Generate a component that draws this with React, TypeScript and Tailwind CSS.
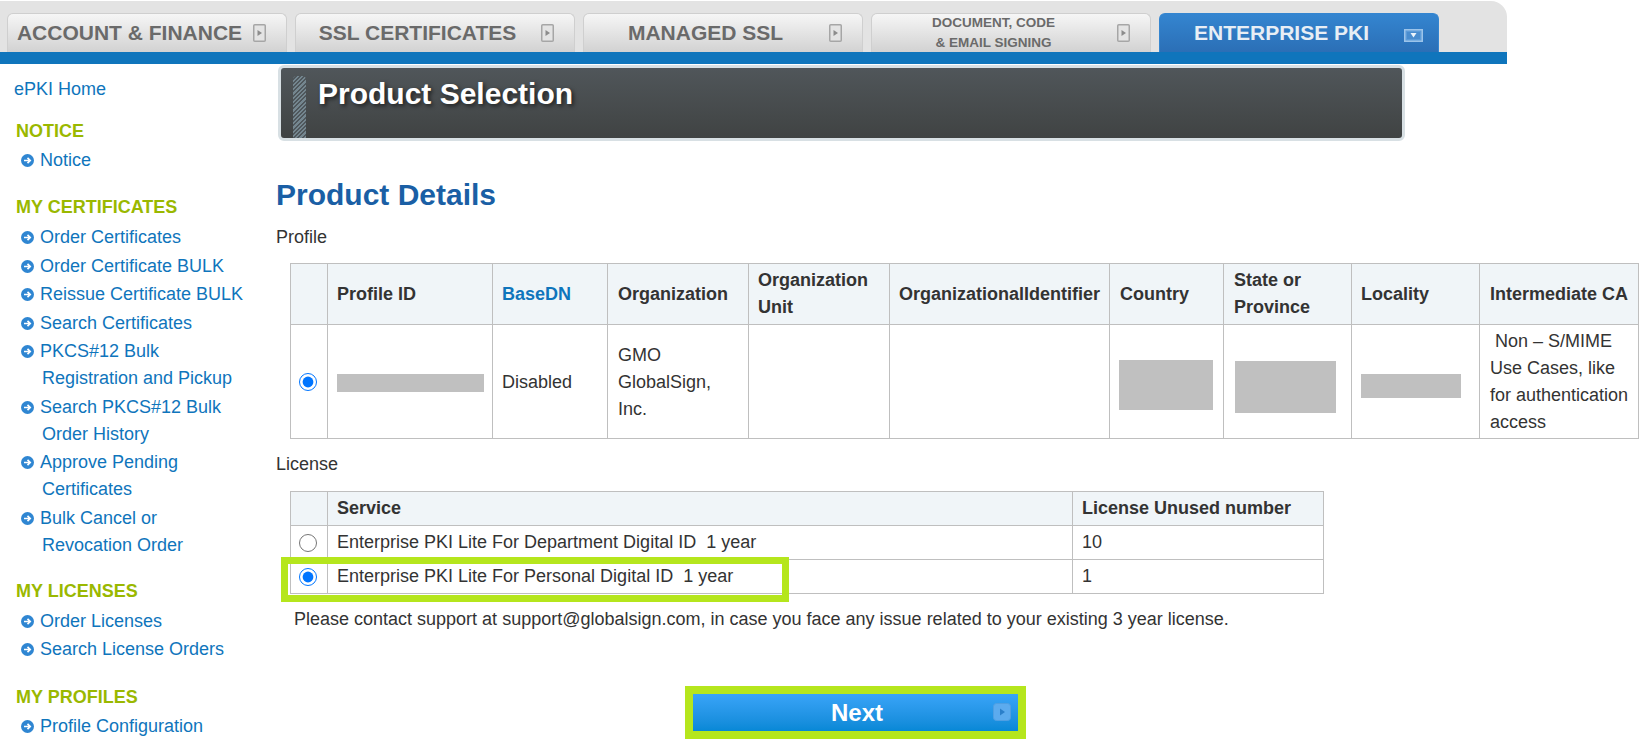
import React from "react";

function TabIcon({ open = false }: { open?: boolean }) {
  if (open) {
    return (
      <svg width="19" height="13" viewBox="0 0 19 13" className="shrink-0 ml-[1px] mt-[5px]">
        <rect x="0.75" y="0.75" width="17.5" height="11.5" fill="#5c9bd8" stroke="#9cc4ea" strokeWidth="1.5" />
        <rect x="3" y="3" width="13" height="7" fill="#4a8dcf" />
        <path d="M6.5 4h6l-3 4.5z" fill="#eef5fb" />
      </svg>
    );
  }
  return (
    <svg width="13" height="18" viewBox="0 0 13 18" className="shrink-0 ml-[2px]">
      <rect x="0.75" y="0.75" width="11.5" height="16.5" rx="1" fill="#e4e4e4" stroke="#a6a6a6" strokeWidth="1.5" />
      <path d="M4.5 6l4.5 3-4.5 3z" fill="#8c8c8c" />
    </svg>
  );
}

function Tab({ label, small, active }: { label: React.ReactNode; small?: boolean; active?: boolean }) {
  return (
    <div
      className={`w-[280px] h-[39px] rounded-t-[6px] border border-b-0 flex items-center ${
        active
          ? "bg-gradient-to-b from-[#3485d0] to-[#2b6fb6] border-[#3485d0] text-[#e8eef5]"
          : "bg-gradient-to-b from-[#f6f6f6] to-[#d2d2d2] border-[#cfcfcf] text-[#6a6a6a]"
      }`}
    >
      <div
        className={`w-[243px] shrink-0 text-center whitespace-nowrap font-bold ${
          small ? "text-[13.5px] leading-[20px]" : "text-[21px] leading-[24px] pb-[1px]"
        }`}
      >
        {label}
      </div>
      <TabIcon open={active} />
    </div>
  );
}

function NavIcon() {
  return (
    <svg width="13" height="13" viewBox="0 0 13 13" className="absolute left-0 top-[7px]">
      <circle cx="6.5" cy="6.5" r="6.5" fill="#2f86d2" />
      <path d="M3 6.5h6M6.5 3.8l2.7 2.7-2.7 2.7" stroke="#ffffff" strokeWidth="1.7" fill="none" />
    </svg>
  );
}

function Item({ children }: { children: React.ReactNode }) {
  return (
    <li className="relative pl-[19px] leading-[27px] text-[18px] text-[#0f75bc] whitespace-nowrap">
      <NavIcon />
      {children}
    </li>
  );
}

function Heading({ children, cls }: { children: React.ReactNode; cls: string }) {
  return <div className={`pl-[16px] text-[18px] leading-[20px] font-bold text-[#9ab800] ${cls}`}>{children}</div>;
}

function Sidebar() {
  const list = "pl-[21px] flex flex-col gap-[1.5px]";
  return (
    <aside className="w-[276px] shrink-0">
      <div className="pl-[14px] pt-[12px] text-[18px] leading-[27px] text-[#0f75bc]">ePKI Home</div>
      <Heading cls="mt-[18px]">NOTICE</Heading>
      <ul className={`${list} mt-[6px]`}>
        <Item>Notice</Item>
      </ul>
      <Heading cls="mt-[23px]">MY CERTIFICATES</Heading>
      <ul className={`${list} mt-[7px]`}>
        <Item>Order Certificates</Item>
        <Item>Order Certificate BULK</Item>
        <Item>Reissue Certificate BULK</Item>
        <Item>Search Certificates</Item>
        <Item>
          PKCS#12 Bulk
          <br />
          <span className="pl-[2px]">Registration and Pickup</span>
        </Item>
        <Item>
          Search PKCS#12 Bulk
          <br />
          <span className="pl-[2px]">Order History</span>
        </Item>
        <Item>
          Approve Pending
          <br />
          <span className="pl-[2px]">Certificates</span>
        </Item>
        <Item>
          Bulk Cancel or
          <br />
          <span className="pl-[2px]">Revocation Order</span>
        </Item>
      </ul>
      <Heading cls="mt-[22px]">MY LICENSES</Heading>
      <ul className={`${list} mt-[7px]`}>
        <Item>Order Licenses</Item>
        <Item>Search License Orders</Item>
      </ul>
      <Heading cls="mt-[24px]">MY PROFILES</Heading>
      <ul className={`${list} mt-[6px]`}>
        <Item>Profile Configuration</Item>
      </ul>
    </aside>
  );
}

const th = "border border-[#bfbfbf] bg-[#f0f5f8] pl-[9px] pr-[8px] text-left font-bold align-middle";
const td = "border border-[#bfbfbf] pl-[9px] pr-[8px] align-middle";

function ProfileTable() {
  return (
    <table className="table-fixed border-collapse w-[1348px] ml-[14px] text-[18px] leading-[27px] text-[#333333]">
      <colgroup>
        <col className="w-[37px]" />
        <col className="w-[165px]" />
        <col className="w-[115px]" />
        <col className="w-[141px]" />
        <col className="w-[141px]" />
        <col className="w-[220px]" />
        <col className="w-[114px]" />
        <col className="w-[128px]" />
        <col className="w-[128px]" />
        <col className="w-[159px]" />
      </colgroup>
      <thead>
        <tr className="h-[61px]">
          <th className={th}></th>
          <th className={th}>Profile ID</th>
          <th className={`${th} text-[#0f75bc]`}>BaseDN</th>
          <th className={`${th} !pl-[10px]`}>Organization</th>
          <th className={th}>Organization Unit</th>
          <th className={`${th} whitespace-nowrap`}>OrganizationalIdentifier</th>
          <th className={`${th} !pl-[10px]`}>Country</th>
          <th className={`${th} !pl-[10px]`}>State or Province</th>
          <th className={th}>Locality</th>
          <th className={`${th} !pl-[10px] whitespace-nowrap`}>Intermediate CA</th>
        </tr>
      </thead>
      <tbody>
        <tr className="h-[114px]">
          <td className={`${td} text-center !pl-0 !pr-[2px]`}>
            <input type="radio" name="profile" defaultChecked className="w-[18px] h-[18px] m-0 align-middle" />
          </td>
          <td className={td}>
            <div className="w-[147px] h-[18px] bg-[#c0c0c0] mt-[2px]" />
          </td>
          <td className={`${td} pt-[1px]`}>Disabled</td>
          <td className={`${td} !pl-[10px] pt-[1px]`}>GMO GlobalSign, Inc.</td>
          <td className={td}></td>
          <td className={td}></td>
          <td className={td}>
            <div className="w-[94px] h-[50px] bg-[#c0c0c0] mt-[6px]" />
          </td>
          <td className={td}>
            <div className="w-[101px] h-[52px] ml-[2px] mt-[10px] bg-[#c0c0c0]" />
          </td>
          <td className={td}>
            <div className="w-[100px] h-[24px] bg-[#c0c0c0] mt-[9px]" />
          </td>
          <td className={`${td} !pl-[10px] !pr-0`}>&nbsp;Non – S/MIME Use Cases, like for authentication access</td>
        </tr>
      </tbody>
    </table>
  );
}

function LicenseTable() {
  return (
    <div className="relative ml-[14px] w-[1033px]">
      <table className="table-fixed border-collapse w-[1033px] text-[18px] leading-[27px] text-[#333333]">
        <colgroup>
          <col className="w-[37px]" />
          <col className="w-[745px]" />
          <col className="w-[251px]" />
        </colgroup>
        <tbody>
          <tr className="h-[34px]">
            <th className={th}></th>
            <th className={th}>Service</th>
            <th className={th}>License Unused number</th>
          </tr>
          <tr className="h-[34px]">
            <td className={`${td} text-center !pl-0 !pr-[2px]`}>
              <input type="radio" name="license" className="w-[18px] h-[18px] m-0 align-middle" />
            </td>
            <td className={`${td} whitespace-pre`}>Enterprise PKI Lite For Department Digital ID  1 year</td>
            <td className={td}>10</td>
          </tr>
          <tr className="h-[34px]">
            <td className={`${td} text-center !pl-0 !pr-[2px]`}>
              <input type="radio" name="license" defaultChecked className="w-[18px] h-[18px] m-0 align-middle" />
            </td>
            <td className={`${td} whitespace-pre`}>Enterprise PKI Lite For Personal Digital ID  1 year</td>
            <td className={td}>1</td>
          </tr>
        </tbody>
      </table>
      <div className="absolute left-[-9px] top-[66px] w-[508px] h-[45px] border-[7px] border-[#b5e61d] pointer-events-none" />
    </div>
  );
}

export default function App() {
  return (
    <div className="w-[1642px] h-[739px] overflow-hidden bg-white font-['Liberation_Sans',Arial,sans-serif]">
      <div className="w-[1507px] mt-[1px] h-[51px] bg-[#e3e3e3] rounded-tr-[16px] flex gap-[8px] pl-[7px] pt-[12px] items-start">
        <Tab label="ACCOUNT & FINANCE" />
        <Tab label="SSL CERTIFICATES" />
        <Tab label="MANAGED SSL" />
        <Tab
          small
          label={
            <>
              DOCUMENT, CODE
              <br />& EMAIL SIGNING
            </>
          }
        />
        <Tab label="ENTERPRISE PKI" active />
      </div>
      <div className="w-[1507px] h-[12px] bg-[#0f75bc]" />
      <div className="flex">
        <Sidebar />
        <main className="flex-1 min-w-0">
          <div className="ml-[2px] mt-[1px] w-[1127px] h-[76px] rounded-[6px] border-[3px] border-[#d8e0e4] bg-gradient-to-b from-[#50565a] to-[#404343] flex">
            <div className="ml-[12px] mt-[8px] w-[13px] h-[62px] rounded-t-[4px] bg-[repeating-linear-gradient(135deg,#74868f_0px,#74868f_1.5px,#4f575c_1.5px,#4f575c_3px)]" />
            <h1 className="ml-[12px] mt-[9px] text-[30px] leading-[34px] font-bold text-white [text-shadow:2px_2px_4px_rgba(0,0,0,0.6)]">
              Product Selection
            </h1>
          </div>
          <h2 className="mt-[35px] text-[30px] leading-[38px] font-bold text-[#1a5fa5]">Product Details</h2>
          <div className="mt-[10px] text-[18px] leading-[27px] text-[#333333]">Profile</div>
          <div className="mt-[12px]">
            <ProfileTable />
          </div>
          <div className="mt-[12px] text-[18px] leading-[27px] text-[#333333]">License</div>
          <div className="mt-[13px]">
            <LicenseTable />
          </div>
          <div className="ml-[18px] mt-[12px] text-[18px] leading-[27px] text-[#333333]">
            Please contact support at support@globalsign.com, in case you face any issue related to your existing 3 year license.
          </div>
          <div className="ml-[409px] mt-[53px] w-[341px] h-[53px] border-[8px] border-[#b5e61d]">
            <div className="relative h-full bg-gradient-to-b from-[#38a4f8] to-[#0688d6] flex items-center justify-center pl-[3px] text-[24px] font-bold text-white">
              Next
              <svg width="18" height="18" viewBox="0 0 18 18" className="absolute right-[7px] top-[9px]">
                <rect x="0.5" y="0.5" width="17" height="17" rx="3" fill="#5cabee" stroke="#4f9fe2" />
                <path d="M7 5.5l5 3.5-5 3.5z" fill="#2a7fca" />
              </svg>
            </div>
          </div>
        </main>
      </div>
    </div>
  );
}
